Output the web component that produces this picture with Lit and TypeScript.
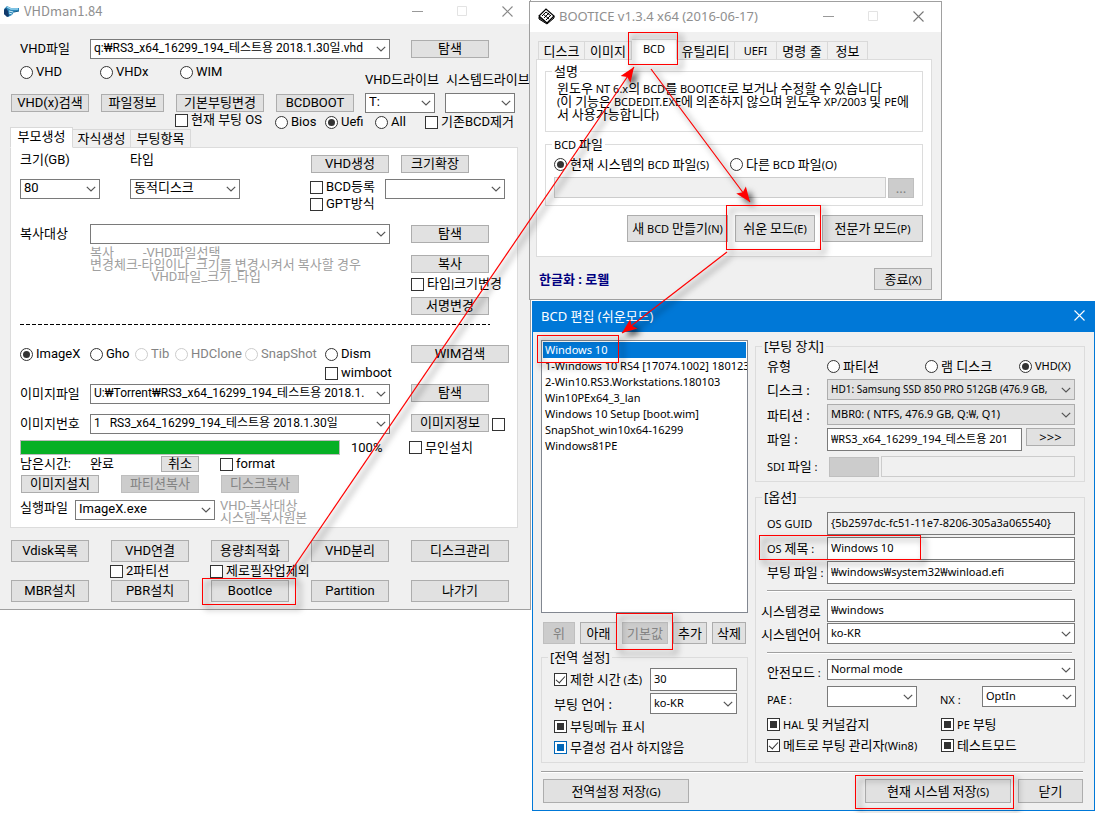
import { LitElement, html, svg, css, unsafeCSS } from "lit";
import { customElement } from "lit/decorators.js";

/* Shared size helpers: w78 = 78px wide, ml21 = 21px left margin, mt5 = 5px top margin. */
const WIDTHS = [26, 32, 34, 37, 38, 40, 42, 45, 46, 47, 49, 50, 51, 55, 58, 60, 63, 65, 66, 68, 70, 71, 75, 78, 80, 81, 85, 86, 87, 88, 90, 94, 96, 98, 100, 101, 110, 120, 140, 146, 174, 176, 181, 194, 195, 248, 300, 320, 332];
const MARGINS = [1, 2, 3, 4, 5, 6, 7, 8, 9, 10, 11, 12, 13, 20, 21, 22, 23, 30, 70, 105];
const sizes = unsafeCSS(
  WIDTHS.map((n) => `.w${n}{width:${n}px;flex:none}`).join("") +
    MARGINS.map((n) => `.ml${n}{margin-left:${n}px}.mt${n}{margin-top:${n}px}`).join("")
);

const common = css`
  :host { display: block; box-sizing: border-box; color: #000; }
  *, *::before { box-sizing: border-box; }
  .row { display: flex; align-items: center; white-space: nowrap; }
  .top { align-items: flex-start; }
  .low { align-items: flex-end; }
  .stack { display: flex; flex-direction: column; }
  .end { justify-content: flex-end; }
  input { margin: 0; }
  button {
    font: inherit; color: inherit; margin: 0; padding: 0; height: 18px; flex: none;
    background: #e1e1e1; border: 1px solid #adadad; white-space: nowrap; line-height: 14px;
  }
  button:disabled { background: #ccc; border-color: #bfbfbf; color: #838383; }
  .titlebar button { background: none; border: 0; height: 20px; width: 20px; display: grid; place-items: center; }
  .titlebar { display: flex; align-items: center; white-space: nowrap; }
  .titlebar h1 { margin: 0; font-weight: 400; flex: 1; }
  .titlebar svg { display: block; flex: none; }
  .combo { display: grid; height: 20px; flex: none; }
  .combo select, .combo svg { grid-area: 1 / 1; }
  .combo svg { justify-self: end; align-self: center; margin-right: 4px; pointer-events: none; }
  .combo select {
    appearance: none; font: inherit; color: inherit; width: 100%; height: 100%; margin: 0; min-width: 0;
    background: #fff; border: 1px solid #7a7a7a; border-radius: 0; padding: 0 16px 2px 3px;
  }
  input[type="text"] {
    font: inherit; color: inherit; min-width: 0; border: 1px solid #7a7a7a;
    background: #fff; padding: 0 3px 3px; border-radius: 0; height: 23px;
  }
  input[type="text"].flat { background: #f0f0f0; }
  input[type="text"]:disabled { background: #f0f0f0; border-color: #ccc; }
  label { white-space: nowrap; }
  .opt { display: flex; align-items: center; gap: 3px; height: 14px; line-height: 14px; flex: none; }
  .opt.off { color: #838383; }
  input[type="checkbox"], input[type="radio"] {
    appearance: none; width: 13px; height: 13px; flex: none; display: grid; place-items: center;
    background: #fff; border: 1px solid #333;
  }
  input[type="radio"] { border-radius: 50%; }
  input:disabled[type="radio"] { border-color: #ccc; }
  input[type="radio"]:checked::before { content: ""; width: 7px; height: 7px; border-radius: 50%; background: #333; }
  input[type="checkbox"]:indeterminate::before { content: ""; width: 7px; height: 7px; background: #333; }
  input[type="checkbox"].hot { border-color: #0067b8; }
  input[type="checkbox"].hot:indeterminate::before { background: #0067b8; }
  input[type="checkbox"]:checked::before {
    content: ""; width: 9px; height: 5px; border: solid #333; border-width: 0 0 1px 1px; transform: translateY(-1px) rotate(-48deg);
  }
  .tabs { display: flex; align-items: flex-end; position: relative; }
  .tabs button { height: 19px; background: #f0f0f0; border: 1px solid #d9d9d9; border-left-width: 0; }
  .tabs button:first-child { border-left-width: 1px; }
  .tabs button.on { height: 21px; background: #fff; border-bottom-color: #fff; padding-bottom: 2px; }
  .panel { background: #fff; border: 1px solid #dcdcdc; }
`;

const chevron = html`<svg width="10" height="6" viewBox="0 0 10 6" aria-hidden="true"><path d="M.8.8 5 5 9.2.8" fill="none" stroke="#555" stroke-width="1.2"/></svg>`;
const combo = (w: string, text: string, name: string, extra = "") =>
  html`<span class="combo ${w} ${extra}"><select aria-label=${name}><option>${text}</option></select>${chevron}</span>`;
const btn = (w: string, text: unknown, off = false) => html`<button type="button" class=${w} ?disabled=${off}>${text}</button>`;
const radio = (w: string, text: unknown, group: string, on = false, off = false) =>
  html`<label class="opt ${w} ${off ? "off" : ""}"><input type="radio" name=${group} .checked=${on} ?disabled=${off} />${text}</label>`;
const check = (w: string, text: unknown, state = "", hot = false) =>
  html`<label class="opt ${w}"><input type="checkbox" class=${hot ? "hot" : ""} .checked=${state === "on"} .indeterminate=${state === "mixed"} />${text}</label>`;

const minIcon = html`<svg width="11" height="11" viewBox="0 0 11 11"><path d="M0 5.5h11" stroke="#999" fill="none"/></svg>`;
const maxIcon = html`<svg width="11" height="11" viewBox="0 0 11 11"><path d="M.5.5h9v9h-9z" stroke="#e3e3e3" fill="none"/></svg>`;
const closeIcon = (c: string) => html`<svg width="11" height="11" viewBox="0 0 11 11"><path d="M.5.5l10 10M10.5.5l-10 10" stroke=${c} fill="none" stroke-width="1.1"/></svg>`;

/* Latin runs are set smaller than the Hangul around them. */
const mix = (s: string) =>
  s.split(/([가-힣]+)/).map((t, i) => (i % 2 ? t : t ? html`<span class="lat">${t}</span>` : ""));

@customElement("vhd-window")
export class VhdWindow extends LitElement {
  static styles = [common, sizes, css`
    :host {
      font: 13px/14px Roboto, "Noto Sans CJK KR", sans-serif; background: #f0f0f0;
      border: solid #a0a0a0; border-width: 0 1px 1px 0;
    }
    .titlebar { background: #fff; height: 24px; padding: 0 13px 2px 4px; gap: 25px; color: #8f8f8f; }
    .titlebar > svg { margin-right: -21px; }
    .titlebar h1 { font: 13px/20px "Noto Sans CJK KR", sans-serif; }
    .body { padding: 15px 0 7px; }
    .in20 { padding-left: 20px; }
    .in11 { padding-left: 11px; }
    .rowB { height: 26px; align-items: flex-start; padding-top: 3px; }
    .rowB > span { align-self: flex-end; padding-bottom: 1px; }
    .rowE { height: 14px; align-items: flex-start; padding-left: 175px; }
    .rowE .drop { margin-top: 2px; }
    .tabs { padding-left: 10px; height: 21px; margin-bottom: -1px; }
    .panel { margin: 0 12px 0 10px; padding: 4px 0 3px 9px; }
    .r1 { height: 21px; align-items: flex-start; }
    .r1 button { align-self: flex-end; }
    .opts2 { gap: 3px; padding-top: 1px; }
    .long select { font-size: 12px; }
    .hint { color: #a0a0a0; line-height: 12px; white-space: pre; margin: 3px 0 0; font-family: inherit; }
    .hint.flush { margin: 0 0 0 5px; }
    .dash { height: 1px; width: 470px; margin-top: 9px; background: repeating-linear-gradient(90deg, #000 0 4px, transparent 4px 6px); }
    progress { appearance: none; display: block; height: 15px; border: 1px solid #bcbcbc; background: #e6e6e6; }
    progress::-webkit-progress-bar { background: #e6e6e6; }
    progress::-webkit-progress-value { background: #06b025; }
    .small { height: 16px; }
    .big button { height: 22px; }
  `];
  render() {
    return html`
      <header class="titlebar">
        <svg width="16" height="13" viewBox="0 0 16 13" aria-hidden="true">
          <path d="M0 4l3-3 4 2 8 0v3l-5 1-2 3-4 2-4-3z" fill="#2d86b8"/><path d="M3 2l4 2 7 0" stroke="#9bd8f2" stroke-width="1.3" fill="none"/>
          <path d="M0 5l2-2 2 3 1 5-2 1-3-3z" fill="#123a6b"/><path d="M5 6l4 1M5 8l3 1" stroke="#d4f0fa"/><path d="M10 7l5-1" stroke="#155c8a"/>
        </svg>
        <h1>VHDman1.84</h1>
        <button type="button" aria-label="최소화">${minIcon}</button>
        <button type="button" aria-label="최대화">${maxIcon}</button>
        <button type="button" aria-label="닫기">${closeIcon("#888")}</button>
      </header>
      <div class="body">
        <div class="row in20"><span class="w70">VHD파일</span>${combo("w300", "q:₩RS3_x64_16299_194_테스트용 2018.1.30일.vhd", "VHD파일", "long")}${btn("w78 ml21", "탐색")}</div>
        <div class="row rowB in20 mt3">
          ${radio("w80", "VHD", "kind")}${radio("w80", "VHDx", "kind")}${radio("w80", "WIM", "kind")}
          <span class="w81 ml105">VHD드라이브</span><span>시스템드라이브</span>
        </div>
        <div class="row in11 mt5">
          ${btn("w78", "VHD(x)검색")}${btn("w63 ml12", "파일정보")}${btn("w88 ml12", "기본부팅변경")}${btn("w78 ml12", "BCDBOOT")}
          ${combo("w70", "T:", "VHD드라이브", "ml11")}${combo("w70", "", "시스템드라이브", "ml10")}
        </div>
        <div class="row rowE">
          ${check("w100", "현재 부팅 OS")}${radio("w50 drop", "Bios", "fw")}${radio("w50 drop", "Uefi", "fw", true)}${radio("w50 drop", "All", "fw")}${check("drop", "기존BCD제거")}
        </div>
        <nav class="tabs"><button type="button" class="on w63">부모생성</button><button type="button" class="w58">자식생성</button><button type="button" class="w60">부팅항목</button></nav>
        <section class="panel">
          <div class="row r1"><span class="w110 mt1">크기(GB)</span><span class="w181 mt1">타입</span>${btn("w78", "VHD생성")}${btn("w68 ml12", "크기확장")}</div>
          <div class="row top mt6">
            ${combo("w80", "80", "크기(GB)")}${combo("w110", "동적디스크", "타입", "ml30")}
            <div class="stack opts2 w75 ml70">${check("", "BCD등록")}${check("", "GPT방식")}</div>
            ${combo("w120", "", "BCD등록 대상")}
          </div>
          <div class="row top mt13">
            <div>
              <div class="row"><span class="w70">복사대상</span>${combo("w300", "", "복사대상")}</div>
              <div class="row"><span class="w70"></span><pre class="hint">복사         -VHD파일선택
변경체크-타입이나  크기를 변경시켜서 복사할 경우
                   VHD파일_크기_타입</pre></div>
            </div>
            <div class="stack ml21 mt1">
              ${btn("w78", "탐색")}${btn("w78 mt12", "복사")}<div class="mt4">${check("", "타입|크기변경")}</div>${btn("w78 mt6", "서명변경")}
            </div>
          </div>
          <div class="dash"></div>
          <div class="row mt20">
            ${radio("w70", "ImageX", "tool", true)}${radio("w45", "Gho", "tool")}${radio("w40", "Tib", "tool", false, true)}${radio("w70", "HDClone", "tool", false, true)}${radio("w80", "SnapShot", "tool", false, true)}${radio("w86", "Dism", "tool")}
            ${btn("w98", "WIM검색")}
          </div>
          <div class="row mt3"><span class="w300"></span><span class="ml5">${check("", "wimboot")}</span></div>
          <div class="row top mt4"><span class="w70 mt3">이미지파일</span>${combo("w300", "U:₩Torrent₩RS3_x64_16299_194_테스트용 2018.1.", "이미지파일", "long")}${btn("w78 ml21", "탐색")}</div>
          <div class="row top mt10"><span class="w70 mt3">이미지번호</span>${combo("w300", "1\u00a0\u00a0\u00a0RS3_x64_16299_194_테스트용 2018.1.30일", "이미지번호", "long")}${btn("w78 ml21", "이미지정보")}<input class="ml3 mt4" type="checkbox" aria-label="이미지정보" /></div>
          <div class="row mt6"><progress class="w320" max="100" value="100" aria-label="진행률"></progress><span class="w58 ml11">100%</span>${check("", "무인설치")}</div>
          <div class="row mt1"><span class="w70">남은시간:</span><span class="w71">완료</span>${btn("w38 small", "취소")}<span class="ml21">${check("", "format")}</span></div>
          <div class="row mt3">${btn("w78 ml1", "이미지설치")}${btn("w78 ml22", "파티션복사", true)}${btn("w78 ml22", "디스크복사", true)}</div>
          <div class="row top mt7"><span class="w55 mt1">실행파일</span>${combo("w140", "ImageX.exe", "실행파일")}<pre class="hint flush">VHD-복사대상
시스템-복사원본</pre></div>
        </section>
        <div class="row in11 big mt12">${btn("w78", "Vdisk목록")}${btn("w78 ml22", "VHD연결")}${btn("w78 ml22", "용량최적화")}${btn("w78 ml22", "VHD분리")}${btn("w98 ml22", "디스크관리")}</div>
        <div class="row in20 mt2"><span class="w90"></span>${check("w100", "2파티션")}${check("", "제로필작업제외")}</div>
        <div class="row in11 big mt2">${btn("w78", "MBR설치")}${btn("w78 ml22", "PBR설치")}${btn("w78 ml22", "BootIce")}${btn("w78 ml22", "Partition")}${btn("w98 ml22", "나가기")}</div>
      </div>`;
  }
}

const booticeText = css`
  :host { font: 13px/14px "Noto Sans", "Noto Sans CJK KR", sans-serif; background: #f0f0f0; }
  .lat { font-size: 11px; }
  fieldset { margin: 0; border: 1px solid #dcdcdc; min-width: 0; padding: 0; }
  legend { padding: 0 2px; margin-left: 6px; line-height: 14px; }
`;

@customElement("bootice-window")
export class BooticeWindow extends LitElement {
  static styles = [common, sizes, booticeText, css`
    :host { border: 1px solid #a0a0a0; }
    .titlebar { background: #fff; height: 30px; padding: 0 13px 2px 8px; gap: 25px; color: #8f8f8f; }
    .titlebar > svg { margin-right: -21px; }
    .titlebar h1 { font: 13px/20px "Noto Sans", sans-serif; }
    .body { padding: 7px 9px 9px 6px; }
    .tabs { padding-left: 2px; margin-bottom: -1px; }
    .panel { padding: 4px 8px 14px 8px; }
    p { margin: 0; padding: 4px 0 10px 11px; line-height: 13px; white-space: pre; }
    .file { padding: 5px 0 7px 8px; }
    .file input[type="text"] { height: 21px; }
    .file button { height: 20px; }
    .cmds button { height: 27px; }
    .foot { justify-content: space-between; padding-left: 3px; }
    .foot strong { color: #000080; }
    .foot button { height: 22px; }
  `];
  render() {
    return html`
      <header class="titlebar">
        <svg width="17" height="17" viewBox="0 0 17 17" aria-hidden="true">
          <path d="M1 8 8 1l8 7-7 7z" fill="#fff" stroke="#000" stroke-width="1.2"/><path d="M1 9v2l8 5 7-6V8l-7 7z" fill="#777" stroke="#000"/>
          <path d="M4 8l4-4M6 10l5-5M8 12l5-5M5 6l6 5M8 4l5 4" stroke="#000" stroke-width="1"/>
        </svg>
        <h1>BOOTICE v1.3.4 x64 (2016-06-17)</h1>
        <button type="button" aria-label="최소화">${minIcon}</button>
        <button type="button" aria-label="최대화">${maxIcon}</button>
        <button type="button" aria-label="닫기">${closeIcon("#777")}</button>
      </header>
      <div class="body">
        <nav class="tabs">
          ${btn("w47", "디스크")}${btn("w47", "이미지")}${btn("on w45", mix("BCD"))}${btn("w58", "유틸리티")}${btn("w42", mix("UEFI"))}${btn("w51", "명령 줄")}${btn("w40", "정보")}
        </nav>
        <section class="panel">
          <fieldset><legend>설명</legend><p>${mix("윈도우 NT 6.x의 BCD를 BOOTICE로 보거나 수정할 수 있습니다\n(이 기능은 BCDEDIT.EXE에 의존하지 않으며 윈도우 XP/2003 및 PE에\n서 사용가능합니다)")}</p></fieldset>
          <fieldset class="mt5"><legend>${mix("BCD 파일")}</legend>
            <div class="file">
              <div class="row">${radio("w176", html`<span>${mix("현재 시스템의 BCD 파일(S)")}</span>`, "bcd", true)}${radio("", html`<span>${mix("다른 BCD 파일(O)")}</span>`, "bcd")}</div>
              <div class="row mt6"><input class="w332" type="text" disabled aria-label="BCD 파일" />${btn("w26 ml2", "...", true)}</div>
            </div>
          </fieldset>
          <div class="row end cmds mt9">${btn("w101", mix("새 BCD 만들기(N)"))}${btn("w80 ml7", mix("쉬운 모드(E)"))}${btn("w101 ml7", mix("전문가 모드(P)"))}</div>
        </section>
        <footer class="row foot mt11"><strong>한글화 : 로웰</strong>${btn("w58", mix("종료(X)"))}</footer>
      </div>`;
  }
}

const ENTRIES = ["Windows 10", "1-Windows 10 RS4 [17074.1002] 180123", "2-Win10.RS3.Workstations.180103", "Win10PEx64_3_lan", "Windows 10 Setup [boot.wim]", "SnapShot_win10x64-16299", "Windows81PE"];

@customElement("bcd-window")
export class BcdWindow extends LitElement {
  static styles = [common, sizes, booticeText, css`
    :host { border: 1px solid #0078d7; }
    .titlebar { background: #0078d7; color: #fff; height: 30px; padding: 0 5px 3px 8px; }
    .titlebar h1 { font: 13px/20px "Noto Sans", "Noto Sans CJK KR", sans-serif; }
    .body { display: grid; grid-template-columns: 207px 1fr; gap: 7px; padding: 8px 9px 0 8px; }
    .list {
      display: block; appearance: none; width: 100%; height: 273px; border: 1px solid #828790; border-radius: 0; background: #fff;
      padding: 1px; margin: 0; overflow: hidden; font: 11px/16px "Noto Sans", sans-serif; color: #000;
    }
    .list option { padding: 0 0 0 2px; height: 16px; min-height: 16px; line-height: 15px; border-radius: 0; }
    .list option:checked { background: linear-gradient(#0078d7, #0078d7); -webkit-text-fill-color: #fff; }
    .order { padding-left: 2px; }
    .order button { height: 22px; }
    .combo, .combo select, input[type="text"] { font: 11px/14px "Noto Sans", "Noto Sans CJK KR", sans-serif; }
    .combo.disk select { font-size: 10px; }
    .combo { height: 21px; }
    .dim select { background: #e1e1e1; border-color: #adadad; }
    .h21 { height: 21px; }
    .global { height: 113px; }
    .global .in { padding: 4px 0 0 12px; }
    .right { margin-top: -1px; }
    .dev { height: 143px; }
    .set { height: 273px; }
    .dev .in, .set .in { padding: 6px 0 0 11px; }
    .set .in { padding-top: 8px; }
    .wide { margin-left: -6px; }
    .line { height: 2px; background: #a0a0a0; border-bottom: 1px solid #fff; }
    .inner { width: 305px; }
    .foot { margin: 8px 11px 0 8px; }
    .foot .row { padding: 6px 0 7px 2px; }
    .foot button { height: 24px; }
    .push { margin-left: auto; }
    input[type="text"]:disabled.sdi { height: 21px; }
    .sdi-btn { height: 20px; }
  `];
  render() {
    return html`
      <header class="titlebar"><h1>BCD 편집 (쉬운모드)</h1><button type="button" aria-label="창 닫기">${closeIcon("#fff")}</button></header>
      <div class="body">
        <div>
          <select class="list" size="17" aria-label="부팅 항목">${ENTRIES.map((e, i) => html`<option ?selected=${i === 0}>${e}</option>`)}</select>
          <div class="row order mt9">${btn("w32", "위", true)}${btn("w37 ml5", "아래")}${btn("w46 ml5", "기본값", true)}${btn("w34 ml5", "추가")}${btn("w34 ml5", "삭제")}</div>
          <fieldset class="global mt6"><legend>[전역 설정]</legend>
            <div class="in">
              <div class="row">${check("w96", html`<span>${mix("제한 시간 (초)")}</span>`, "on")}<input class="w87" type="text" value="30" aria-label="제한 시간" /></div>
              <div class="row mt2"><span class="w96">부팅 언어 :</span>${combo("w87", "ko-KR", "부팅 언어")}</div>
              <div class="mt5">${check("", "부팅메뉴 표시", "mixed")}</div>
              <div class="mt7">${check("", "무결성 검사 하지않음", "mixed", true)}</div>
            </div>
          </fieldset>
        </div>
        <div class="right">
          <fieldset class="dev"><legend>[부팅 장치]</legend>
            <div class="in">
              <div class="row"><span class="w60">유형</span>${radio("w98", "파티션", "dev")}${radio("w94", "램 디스크", "dev")}${radio("", mix("VHD(X)"), "dev", true)}</div>
              <div class="row mt6"><span class="w60">디스크 :</span>${combo("w248", "HD1: Samsung SSD 850 PRO 512GB (476.9 GB, ", "디스크", "dim disk")}</div>
              <div class="row mt4"><span class="w60">파티션 :</span>${combo("w248", "MBR0: ( NTFS, 476.9 GB, Q:₩, Q1)", "파티션", "dim")}</div>
              <div class="row top mt3"><span class="w60 mt4">파일 :</span><input class="w195 h21" type="text" value="₩RS3_x64_16299_194_테스트용 201" aria-label="파일" />${btn("w49 ml4", ">>>")}</div>
              <div class="row mt5"><span class="w60">${mix("SDI 파일 :")}</span>${btn("w50 ml2 sdi-btn", "", true)}<input class="w194 ml2 sdi" type="text" disabled aria-label="SDI 파일" /></div>
            </div>
          </fieldset>
          <fieldset class="set mt8"><legend>[옵션]</legend>
            <div class="in">
              <div class="row"><span class="w60">${mix("OS GUID")}</span><input class="w248 flat" type="text" readonly value="{5b2597dc-fc51-11e7-8206-305a3a065540}" aria-label="OS GUID" /></div>
              <div class="row mt2"><span class="w60">${mix("OS 제목 :")}</span><input class="w248" type="text" value="Windows 10" aria-label="OS 제목" /></div>
              <div class="row mt1"><span class="w60">${mix("부팅 파일 :")}</span><input class="w248" type="text" value="₩windows₩system32₩winload.efi" aria-label="부팅 파일" /></div>
              <div class="line inner mt6"></div>
              <div class="row mt7"><span class="w66 wide">시스템경로</span><input class="w248" type="text" value="₩windows" aria-label="시스템경로" /></div>
              <div class="row mt1"><span class="w66 wide">시스템언어</span>${combo("w248", "ko-KR", "시스템언어")}</div>
              <div class="line inner mt8"></div>
              <div class="row low mt5"><span class="w60">${mix("안전모드 :")}</span>${combo("w248", "Normal mode", "안전모드")}</div>
              <div class="row low mt6"><span class="w60">${mix("PAE :")}</span>${combo("w90", "", "PAE")}<span class="w42 ml23">${mix("NX :")}</span>${combo("w94", "OptIn", "NX")}</div>
              <div class="row mt10">${check("w174", html`<span>${mix("HAL 및 커널감지")}</span>`, "mixed")}${check("", html`<span>${mix("PE 부팅")}</span>`, "mixed")}</div>
              <div class="row mt7">${check("w174", html`<span>${mix("메트로 부팅 관리자(Win8)")}</span>`, "on")}${check("", "테스트모드", "mixed")}</div>
            </div>
          </fieldset>
        </div>
      </div>
      <footer class="foot"><div class="line"></div>
        <div class="row">${btn("w146", mix("전역설정 저장(G)"))}<span class="push"></span>${btn("w146", mix("현재 시스템 저장(S)"))}${btn("w65 ml7", "닫기")}</div>
      </footer>`;
  }
}

/* Red call-out frames (x, y, width, height) and arrows (from, to) laid over the windows. */
const FRAMES = [[202, 578, 93, 26], [628, 32, 49, 32], [726, 205, 94, 44], [537, 335, 81, 27], [616, 613, 56, 36], [759, 535, 161, 24], [855, 775, 158, 33]];
const ARROWS = [[287, 577, 634, 67], [651, 69, 750, 202], [727, 252, 622, 333]];

@customElement("app-root")
export class AppRoot extends LitElement {
  static styles = css`
    :host { display: block; }
    .desktop { position: relative; min-height: 100vh; background: #fff; overflow: hidden; }
    .desktop > * { position: absolute; }
    .vhd { left: 0; top: 0; width: 531px; }
    .bootice { left: 529px; top: 1px; width: 413px; }
    .bcd { left: 532px; top: 301px; width: 563px; }
    .marks { inset: 0; width: 100%; height: 100%; pointer-events: none; filter: drop-shadow(4px 4px 3px rgba(0, 0, 0, 0.75)); }
    .frame { fill: none; stroke: #f00; }
    .shaft { stroke: #f00; stroke-width: 1.2; }
    .head { fill: #f00; }
  `;
  render() {
    return html`<main class="desktop">
      <vhd-window class="vhd"></vhd-window>
      <bootice-window class="bootice"></bootice-window>
      <bcd-window class="bcd"></bcd-window>
      <svg class="marks" aria-hidden="true">
        ${FRAMES.map(([x, y, w, h]) => svg`<rect class="frame" x=${x + 0.5} y=${y + 0.5} width=${w} height=${h} />`)}
        ${ARROWS.map(([x1, y1, x2, y2]) => {
          const a = (Math.atan2(y2 - y1, x2 - x1) * 180) / Math.PI;
          return svg`<line class="shaft" x1=${x1} y1=${y1} x2=${x2} y2=${y2} /><path class="head" d="M0 0-15-6-12 0-15 6z" transform="translate(${x2} ${y2}) rotate(${a})" />`;
        })}
      </svg>
    </main>`;
  }
}
